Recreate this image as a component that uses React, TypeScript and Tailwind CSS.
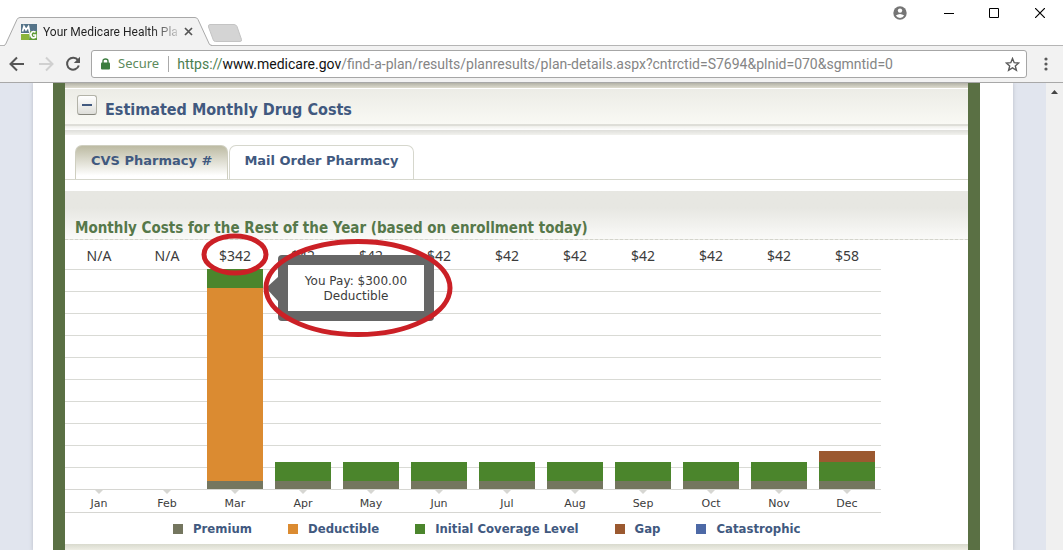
import React from "react";

type Kind = "premium" | "deductible" | "initial" | "gap" | "catastrophic";

const fill: Record<Kind, string> = {
  premium: "bg-[#74765f]",
  deductible: "bg-[#db8b31]",
  initial: "bg-[#4b852c]",
  gap: "bg-[#9b5930]",
  catastrophic: "bg-[#4d69a6]",
};

const regular: [Kind, number][] = [["initial", 19], ["premium", 8]];

const months: { name: string; cost: string; parts: [Kind, number][] }[] = [
  { name: "Jan", cost: "N/A", parts: [] },
  { name: "Feb", cost: "N/A", parts: [] },
  { name: "Mar", cost: "$342", parts: [["initial", 19], ["deductible", 193], ["premium", 8]] },
  { name: "Apr", cost: "$42", parts: regular },
  { name: "May", cost: "$42", parts: regular },
  { name: "Jun", cost: "$42", parts: regular },
  { name: "Jul", cost: "$42", parts: regular },
  { name: "Aug", cost: "$42", parts: regular },
  { name: "Sep", cost: "$42", parts: regular },
  { name: "Oct", cost: "$42", parts: regular },
  { name: "Nov", cost: "$42", parts: regular },
  { name: "Dec", cost: "$58", parts: [["gap", 11], ...regular] },
];

const legend: [Kind, string][] = [
  ["premium", "Premium"],
  ["deductible", "Deductible"],
  ["initial", "Initial Coverage Level"],
  ["gap", "Gap"],
  ["catastrophic", "Catastrophic"],
];

function TitleBar() {
  return (
    <div className="flex h-[46px] items-start justify-between bg-white">
      <div className="flex h-full items-end">
        <div className="relative z-10 ml-1 flex h-[29px] w-[208px] items-center">
          <svg className="absolute inset-0 h-full w-full" viewBox="0 0 208 29" preserveAspectRatio="none" aria-hidden="true">
            <path d="M0 29 L1.5 27.5 L13 2.5 Q14 .5 16 .5 H191 Q193 .5 194 2.5 L205.500 27.500 L208 29Z" fill="#f2f2f2" />
            <path d="M0 28.500 L1.500 27.500 L13 2.500 Q14 .5 16 .5 H191 Q193 .5 194 2.500 L205.500 27.500 L208 28.500" fill="none" stroke="#a9a9a9" />
          </svg>
          <div className="relative flex w-full items-center pl-[17px]">
            <svg width="16" height="16" viewBox="0 0 16 16" aria-hidden="true">
              <path d="M0 0H16V16H0Z" fill="#fff" />
              <path d="M0 0H16V7H8V9H0Z" fill="#557489" />
              <path d="M0 10H8V16H0Z" fill="#8bb53c" />
              <path d="M9 7H16V16H8Z" fill="#5d9a35" />
              <path d="M1.500 7.500L3 2.500L5 6L7.500 2.500L8.500 7.500" fill="none" stroke="#fff" strokeWidth="1.700" />
              <path d="M14.500 8.200Q12.500 6.800 10.800 8.200Q9 10 10.300 12.600Q12 14.700 14.500 13.200V11H12" fill="none" stroke="#fff" strokeWidth="1.700" />
            </svg>
            <span className="ml-[6px] bg-gradient-to-r from-[#222] from-80% to-[#cfcfcf] bg-clip-text font-['Roboto',sans-serif] text-[12px] leading-4 whitespace-nowrap text-transparent">
              Your Medicare Health Pla
            </span>
            <button aria-label="Close tab" className="mr-[16px] ml-auto flex size-4 items-center justify-center">
              <svg width="9" height="9" viewBox="0 0 9 9">
                <path d="M1 1L8 8M8 1L1 8" stroke="#555" strokeWidth="1.700" />
              </svg>
            </button>
          </div>
        </div>
        <button aria-label="New tab" className="mb-[3px] -ml-[5px]">
          <svg width="36" height="19" viewBox="0 0 36 19">
            <path d="M3 .5H27Q29 .5 30 2.500L34.500 15.500Q35 17.500 33 17.500H8.500Q7 17.500 6.300 16L1.500 3Q1 .5 3 .5Z" fill="#d4d4d4" stroke="#c4c4c4" />
          </svg>
        </button>
      </div>
      <div className="flex h-[26px] items-center pr-[18px]">
        <button aria-label="Profile" className="mr-[37px]">
          <svg width="14" height="14" viewBox="0 0 14 14">
            <circle cx="7" cy="7" r="6.700" fill="#757575" />
            <circle cx="7" cy="4.600" r="2.200" fill="#fff" />
            <path d="M2.800 9.600Q7 6.500 11.200 9.600Q9.800 12 7 12Q4.200 12 2.800 9.600Z" fill="#fff" />
          </svg>
        </button>
        <button aria-label="Minimize" className="mr-[35px]">
          <svg width="10" height="10" viewBox="0 0 10 10"><path d="M0 5.500H10" stroke="#000" /></svg>
        </button>
        <button aria-label="Maximize" className="mr-[36px]">
          <svg width="10" height="10" viewBox="0 0 10 10"><path d="M.5 .5H9.500V9.500H.5Z" fill="none" stroke="#000" /></svg>
        </button>
        <button aria-label="Close">
          <svg width="10" height="10" viewBox="0 0 10 10"><path d="M0 0L10 10M10 0L0 10" stroke="#000" strokeWidth="1.200" /></svg>
        </button>
      </div>
    </div>
  );
}

function Toolbar() {
  return (
    <div className="-mt-px flex h-[38px] items-center border-y border-t-[#b5b5b5] border-b-[#a8a8a8] bg-[#f2f2f2] pr-[15px] pl-[9px]">
      <button aria-label="Back" className="mr-[13px]">
        <svg width="16" height="16" viewBox="0 0 16 16"><path d="M15 8H2M8 1.500L1.500 8L8 14.500" fill="none" stroke="#555" strokeWidth="2" /></svg>
      </button>
      <button aria-label="Forward" className="mr-[11px]">
        <svg width="16" height="16" viewBox="0 0 16 16"><path d="M1 8H14M8 1.500L14.500 8L8 14.500" fill="none" stroke="#d0d0d0" strokeWidth="2" /></svg>
      </button>
      <button aria-label="Reload" className="mr-[10px]">
        <svg width="16" height="16" viewBox="0 0 16 16">
          <path d="M13 4.200A6 6 0 1 0 13.800 9.500" fill="none" stroke="#555" strokeWidth="2" />
          <path d="M15 .8V7H8.800Z" fill="#555" />
        </svg>
      </button>
      <div className="flex h-7 min-w-0 flex-1 items-center rounded-[3px] border border-[#a6a6a6] bg-white pr-[6px] pl-[9px]">
        <svg className="shrink-0" width="9" height="12" viewBox="0 0 9 12" aria-hidden="true">
          <rect x="0" y="4.500" width="9" height="7" rx="1" fill="#3c7d3f" />
          <path d="M2 5V3Q2 1 4.500 1T7 3V5" fill="none" stroke="#3c7d3f" strokeWidth="1.400" />
        </svg>
        <span className="ml-[8px] text-[13px] text-[#5c8a5c]">Secure</span>
        <span className="mx-2 ml-[9px] h-4 w-px shrink-0 bg-[#aaa]" />
        <label htmlFor="address" className="font-['Roboto',sans-serif] text-[14px] whitespace-nowrap text-[#4a8050]">
          https://<span className="text-[#111]">www.medicare.gov</span>
        </label>
        <input
          id="address"
          className="min-w-0 flex-1 bg-transparent font-['Roboto',sans-serif] text-[14px] text-[#858585] outline-none"
          defaultValue="/find-a-plan/results/planresults/plan-details.aspx?cntrctid=S7694&plnid=070&sgmntid=0"
        />
        <button aria-label="Bookmark this page" className="shrink-0">
          <svg width="15" height="15" viewBox="0 0 15 15">
            <path d="M7.500 1.500L9.200 5.700L13.700 6L10.300 8.900L11.400 13.300L7.500 10.900L3.600 13.300L4.700 8.900L1.300 6L5.800 5.700Z" fill="none" stroke="#5a5a5a" strokeWidth="1.400" />
          </svg>
        </button>
      </div>
      <button aria-label="Menu" className="ml-[17px]">
        <svg width="4" height="14" viewBox="0 0 4 14" fill="#5a5a5a">
          <circle cx="2" cy="2" r="1.600" /><circle cx="2" cy="7" r="1.600" /><circle cx="2" cy="12" r="1.600" />
        </svg>
      </button>
    </div>
  );
}

function Chart() {
  return (
    <div className="relative w-full max-w-[816px]">
      <div className="flex h-[29px] items-center pt-[2px] text-[14px] text-[#3c3c3c]">
        {months.map((m) => (
          <span key={m.name} className="flex-1 text-center font-['Noto_Sans',sans-serif]">{m.cost}</span>
        ))}
      </div>
      <div className="grid">
        <div className="col-start-1 row-start-1 flex flex-col border-b border-[#d6d6d2]">
          {Array.from({ length: 10 }, (_, i) => (
            <div key={i} className="h-[22px] border-t border-[#d9dad5]" />
          ))}
        </div>
        <div className="z-10 col-start-1 row-start-1 flex h-[220px] items-end">
          {months.map((m) => (
            <div key={m.name} className="flex-1 px-[6px]">
              {m.parts.map(([kind, size]) => (
                <div key={kind} className={fill[kind]} style={{ height: size }} />
              ))}
            </div>
          ))}
        </div>
      </div>
      <div className="flex h-[23px] border-b border-[#d6d6d2] text-[11px] leading-[16px] text-[#3c3c3c]">
        {months.map((m) => (
          <div key={m.name} className="flex flex-1 flex-col items-center">
            <svg width="8" height="4" viewBox="0 0 8 4" aria-hidden="true"><path d="M0 0H8L4 4Z" fill="#d6d6d2" /></svg>
            <span className="pt-[2px]">{m.name}</span>
          </div>
        ))}
      </div>
      <ul className="flex h-[31px] items-center gap-9 pl-[108px] font-['DejaVu_Sans_Condensed','Noto_Sans',sans-serif] text-[13px] font-bold whitespace-nowrap text-[#41597f]">
        {legend.map(([kind, name]) => (
          <li key={kind} className="flex items-center gap-[10px]">
            <span className={`size-[10px] ${fill[kind]}`} />
            {name}
          </li>
        ))}
      </ul>
      <div role="tooltip" className="absolute top-[15px] left-[213px] z-20 w-[156px] rounded-[4px] bg-[#666] p-[10px]">
        <svg className="absolute top-[22px] -left-[12px]" width="12" height="24" viewBox="0 0 12 24" aria-hidden="true">
          <path d="M12 0V24L0 11Z" fill="#666" />
        </svg>
        <p className="bg-white pt-[9px] pb-[7px] text-center text-[12px] leading-[15px] whitespace-nowrap text-[#3c3c3c]">
          You Pay: $300.00
          <br />
          Deductible
        </p>
      </div>
      <svg className="pointer-events-none absolute top-[-10px] left-[130px] z-30" width="270" height="112" viewBox="0 0 270 112" fill="none" stroke="#cb2026" strokeWidth="5" aria-hidden="true">
        <ellipse cx="40" cy="24.500" rx="31" ry="18.500" />
        <ellipse cx="163" cy="58" rx="92" ry="46.500" />
      </svg>
    </div>
  );
}

export default function App() {
  return (
    <div className="flex h-screen flex-col overflow-hidden bg-white font-['Noto_Sans',sans-serif]">
      <header className="shrink-0">
        <TitleBar />
        <Toolbar />
      </header>
      <div className="flex min-h-0 flex-1">
        <div className="min-w-0 flex-1 overflow-hidden bg-[#e1e5ee] font-['DejaVu_Sans',sans-serif]">
          <main className="mx-auto min-h-full max-w-[980px] bg-white pr-[33px] pl-5 shadow-[0_0_4px_#b9bdc6]">
            <div className="flex min-h-[468px] flex-col border-x-[12px] border-[#5a7044]">
              <div className="h-[6px] border-b border-white bg-gradient-to-b from-[#b3b2a6] to-[#dedccf]" />
              <div className="flex h-[35px] items-center gap-2 bg-gradient-to-b from-[#ecece6] to-[#f9f9f4] pt-[2px] pl-3">
                <button aria-label="Collapse section" className="mb-[5px] flex size-[20px] items-center justify-center rounded-[3px] border border-[#b3b3a8] border-b-[#85857c] bg-gradient-to-b from-white to-[#deded9]">
                  <span className="h-[2px] w-[10px] bg-[#41597f]" />
                </button>
                <h2 className="pt-[4px] font-['DejaVu_Sans_Condensed','Noto_Sans',sans-serif] text-[16px] font-bold text-[#41597f]">Estimated Monthly Drug Costs</h2>
              </div>
              <div className="h-[6px] border-t-2 border-[#deded8] bg-gradient-to-b from-[#efefea] to-white" />
              <div className="h-[5px] bg-gradient-to-b from-[#dededa] to-[#f2f2ee]" />
              <div role="tablist" className="mt-[10px] flex h-[35px] gap-px border-b border-[#d6d7cd] pl-[10px] text-[13px] font-bold text-[#41597f]">
                <button role="tab" aria-selected="true" className="rounded-t-[7px] border border-b-0 border-[#cfcfc0] bg-gradient-to-b from-[#bdbba3] to-white to-90% px-[15px] pb-1">
                  CVS Pharmacy #
                </button>
                <button role="tab" aria-selected="false" className="rounded-t-[7px] border border-b-0 border-[#d6d7cd] bg-white px-[14px] pb-1">
                  Mail Order Pharmacy
                </button>
              </div>
              <div className="mt-[11px] flex h-[49px] items-end border-b border-dashed border-[#d3d4cb] bg-gradient-to-b from-[#e7e7e2] from-35% to-[#fafaf8] pl-[10px]">
                <h3 className="font-['DejaVu_Sans_Condensed','Noto_Sans',sans-serif] text-[15px] leading-[22px] font-bold text-[#56784a]">
                  Monthly Costs for the Rest of the Year (based on enrollment today)
                </h3>
              </div>
              <Chart />
              <div className="flex-1 bg-gradient-to-b from-[#d9dace] to-[#f1f1e8]" />
            </div>
          </main>
        </div>
        <div className="w-[17px] bg-[#f0f0f0]">
          <button aria-label="Scroll up" className="flex h-[17px] w-full items-center justify-center">
            <svg width="7" height="4" viewBox="0 0 7 4"><path d="M0 4L3.500 0L7 4Z" fill="#444" /></svg>
          </button>
        </div>
      </div>
    </div>
  );
}
